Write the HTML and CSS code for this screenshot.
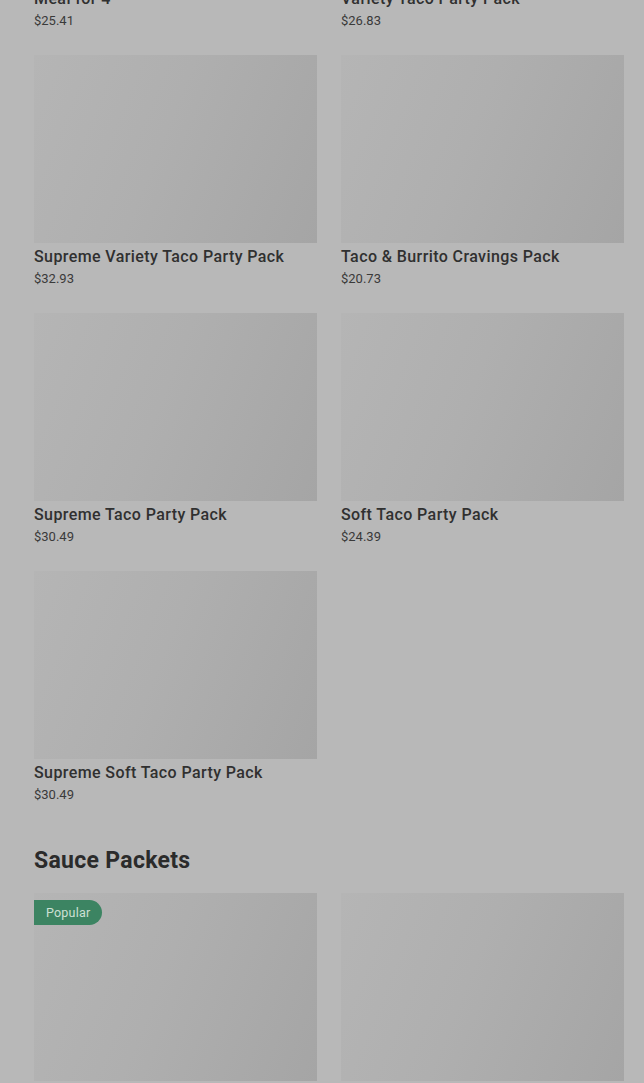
FILE: index.html
```html
<!DOCTYPE html>
<html>
<head>
<meta charset="utf-8">
<link rel="stylesheet" href="styles.css">
</head>
<body>
<main class="page">
  <section class="grid grid-first">
    <div class="card">
      <div class="thumb"></div>
      <div class="name">Meal for 4</div>
      <div class="price">$25.41</div>
    </div>
    <div class="card">
      <div class="thumb"></div>
      <div class="name">Variety Taco Party Pack</div>
      <div class="price">$26.83</div>
    </div>
    <div class="card">
      <div class="thumb"></div>
      <div class="name">Supreme Variety Taco Party Pack</div>
      <div class="price">$32.93</div>
    </div>
    <div class="card">
      <div class="thumb"></div>
      <div class="name">Taco &amp; Burrito Cravings Pack</div>
      <div class="price">$20.73</div>
    </div>
    <div class="card">
      <div class="thumb"></div>
      <div class="name">Supreme Taco Party Pack</div>
      <div class="price">$30.49</div>
    </div>
    <div class="card">
      <div class="thumb"></div>
      <div class="name">Soft Taco Party Pack</div>
      <div class="price">$24.39</div>
    </div>
    <div class="card">
      <div class="thumb"></div>
      <div class="name">Supreme Soft Taco Party Pack</div>
      <div class="price">$30.49</div>
    </div>
  </section>

  <h2 class="section-title">Sauce Packets</h2>

  <section class="grid">
    <div class="card">
      <div class="thumb">
        <span class="badge">Popular</span>
      </div>
      <div class="name">Mild Sauce Packets</div>
      <div class="price">$0.00</div>
    </div>
    <div class="card">
      <div class="thumb"></div>
      <div class="name">Hot Sauce Packets</div>
      <div class="price">$0.00</div>
    </div>
  </section>
</main>
</body>
</html>
```
FILE: styles.css
```css
html, body {
  margin: 0;
  padding: 0;
  background: #b8b8b8;
  height: 1083px;
  overflow: hidden;
}

body {
  font-family: Roboto, "Liberation Sans", Arial, sans-serif;
  color: #2f2f2f;
}

.page {
  padding: 0 20px 0 34px;
}

.grid {
  display: grid;
  grid-template-columns: 283px 283px;
  column-gap: 24px;
  row-gap: 25px;
}

.grid-first {
  margin-top: -203px;
}

.card {
  display: flex;
  flex-direction: column;
}

.thumb {
  position: relative;
  height: 188px;
  background: linear-gradient(112deg, #b5b5b5 0%, #afafaf 45%, #a5a5a5 100%);
}

.name {
  margin-top: 4px;
  font-size: 16px;
  line-height: 20px;
  font-weight: 500;
  letter-spacing: 0.4px;
  color: #303030;
  white-space: nowrap;
}

.price {
  margin-top: 3px;
  font-size: 13px;
  line-height: 18px;
  color: #3a3a3a;
}

.section-title {
  margin: 43px 0 18px;
  font-size: 23px;
  line-height: 28px;
  font-weight: 700;
  letter-spacing: 0.3px;
  color: #2b2b2b;
}

.badge {
  position: absolute;
  top: 7px;
  left: 0;
  height: 25px;
  padding: 0 12px;
  display: flex;
  align-items: center;
  background: #3c8462;
  color: #cde0d4;
  font-size: 12.5px;
  letter-spacing: 0.2px;
  border-radius: 0 13px 13px 0;
}
```
